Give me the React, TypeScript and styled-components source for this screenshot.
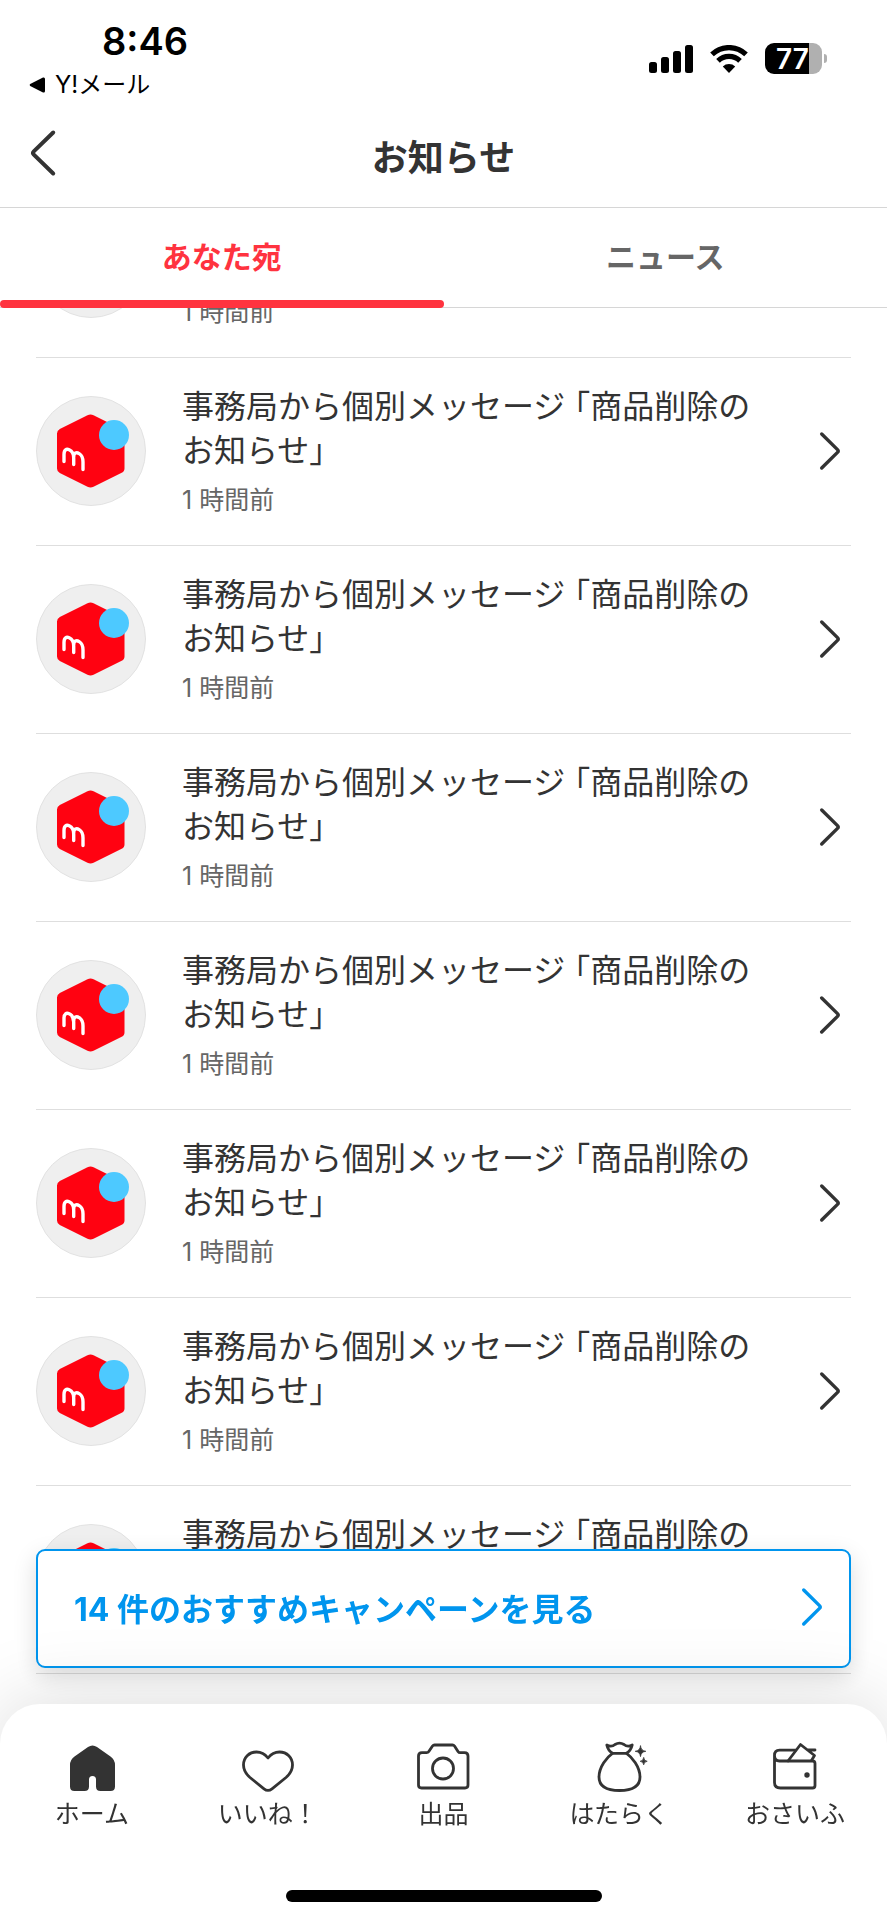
import React from "react";
import styled, { createGlobalStyle } from "styled-components";

const color = {
  text: "#333333",
  sub: "#666666",
  line: "#d6d6d6",
  red: "#ff333f",
  blue: "#0095ee",
  brand: "#ff0211",
  badge: "#4dc9ff",
};

const GlobalStyle = createGlobalStyle`
  *, *::before, *::after { box-sizing: border-box; }
  body {
    margin: 0;
    background: #fff;
    color: ${color.text};
    font-family: Inter, "Noto Sans CJK JP", sans-serif;
  }
  button { font: inherit; color: inherit; background: none; border: 0; padding: 0; cursor: pointer; }
  a { color: inherit; text-decoration: none; }
  p, h1, h2, ul { margin: 0; padding: 0; }
  ul { list-style: none; }
  svg { display: block; flex: none; }
`;

const Screen = styled.div`
  min-height: 100vh;
  background: #fff;
`;

const Top = styled.header`
  position: sticky;
  top: 0;
  z-index: 1;
  background: #fff;
`;

const StatusBar = styled.div`
  display: flex;
  justify-content: space-between;
  align-items: flex-start;
  height: 104px;
  padding: 17px 60px 0 29px;
  color: #000;
`;

const Clock = styled.p`
  padding-left: 73px;
  font-size: 38px;
  font-weight: 600;
  line-height: 48px;
`;

const ReturnLink = styled.a`
  display: flex;
  align-items: center;
  gap: 9px;
  font-size: 24px;
  line-height: 40px;
`;

const StatusIcons = styled.div`
  display: flex;
  align-items: center;
  gap: 17px;
  padding-top: 26px;
`;

const Battery = styled.div`
  display: flex;
  align-items: center;
  gap: 2px;
`;

const BatteryBody = styled.div`
  width: 57px;
  height: 31px;
  border-radius: 9px;
  background: linear-gradient(to right, #000 77%, #b0b0b0 77%);
  color: #fff;
  font-size: 28px;
  font-weight: 600;
  line-height: 32px;
  padding-left: 11px;
`;

const BatteryTip = styled.div`
  width: 3px;
  height: 9px;
  border-radius: 0 4px 4px 0;
  background: #b0b0b0;
`;

const TitleBar = styled.div`
  display: grid;
  grid-template-columns: 1fr auto 1fr;
  align-items: center;
  height: 104px;
  padding: 0 29px;
  border-bottom: 1px solid ${color.line};
`;

const BackButton = styled.button`
  justify-self: start;
  padding-bottom: 6px;
`;

const Title = styled.h1`
  padding-top: 4px;
  font-size: 36px;
  font-weight: 700;
  line-height: 48px;
`;

const Tabs = styled.div`
  display: grid;
  grid-template-columns: 1fr 1fr;
  height: 100px;
  border-bottom: 1px solid ${color.line};
`;

const Tab = styled.button<{ $active?: boolean }>`
  display: grid;
  grid-template-rows: 1fr 8px;
  align-items: center;
  height: 100px;
  color: ${(p) => (p.$active ? color.red : color.sub)};
  font-size: 30px;
  font-weight: 700;

  &::after {
    content: "";
    height: 8px;
    border-radius: 4px;
    background: ${(p) => (p.$active ? color.red : "transparent")};
  }
`;

const TabLabel = styled.span`
  padding-top: 2px;
`;

const ListArea = styled.main`
  overflow: hidden;
`;

/* The list is scrolled part-way through its first entry. */
const List = styled.ul`
  margin-top: -138px;
  padding: 0 36px;
`;

const Item = styled.li`
  border-bottom: 1px solid #dedede;
`;

const ItemLink = styled.a`
  display: flex;
  align-items: center;
  padding: 26px 9px 27px 0;
`;

const Avatar = styled.div`
  flex: none;
  width: 110px;
  height: 110px;
  border: 1px solid #e2e2e2;
  border-radius: 50%;
  background: #efefef;
`;

const ItemBody = styled.div`
  flex: 1;
  min-width: 0;
  padding: 1px 54px 0 36px;
`;

const ItemTitle = styled.h2`
  font-size: 32px;
  font-weight: 400;
  line-height: 44px;
  font-feature-settings: "halt";
`;

const ItemTime = styled.p`
  margin-top: 9px;
  color: ${color.sub};
  font-size: 25px;
  line-height: 36px;
`;

const Dock = styled.div`
  position: fixed;
  left: 0;
  right: 0;
  bottom: 0;
  z-index: 2;
`;

const Campaign = styled.button`
  display: flex;
  justify-content: space-between;
  align-items: center;
  width: calc(100% - 72px);
  height: 119px;
  margin: 0 36px 36px;
  padding: 0 25px 4px 36px;
  border: 2px solid ${color.blue};
  border-radius: 9px;
  background: #fff;
  box-shadow: 0 8px 24px rgba(0, 0, 0, 0.14);
  color: ${color.blue};
  font-size: 32px;
  font-weight: 700;
`;

const BottomNav = styled.nav`
  position: relative;
  padding: 32px 4px 18px;
  border-radius: 40px 40px 0 0;
  background: #fff;
  box-shadow: 0 0 80px rgba(0, 0, 0, 0.15);
`;

const NavItems = styled.ul`
  display: grid;
  grid-template-columns: repeat(5, 1fr);
`;

const NavLink = styled.a`
  display: flex;
  flex-direction: column;
  align-items: center;
  font-size: 25px;
  line-height: 36px;
`;

const HomeIndicator = styled.div`
  width: 316px;
  height: 12px;
  margin: 58px auto 0;
  border-radius: 6px;
  background: #000;
`;

const Chevron = () => (
  <svg width="24" height="42" viewBox="0 0 24 42" fill="none" stroke="currentColor" strokeWidth="3.4" strokeLinecap="round" strokeLinejoin="round" aria-hidden="true">
    <path d="M3.7 4 L19.5 19.6 Q20.9 21 19.5 22.4 L3.7 38" />
  </svg>
);

const BackIcon = () => (
  <svg width="28" height="48" viewBox="0 0 28 48" fill="none" stroke="currentColor" strokeWidth="4" strokeLinecap="round" strokeLinejoin="round" aria-hidden="true">
    <path d="M24.2 3.5 L4.8 22.4 Q3.2 24 4.8 25.6 L24.2 44.5" />
  </svg>
);

const SignalIcon = () => (
  <svg width="44" height="28" viewBox="0 0 44 28" aria-hidden="true">
    <rect x="0" y="17" width="8" height="11" rx="2.5" />
    <rect x="12" y="12" width="8" height="16" rx="2.5" />
    <rect x="24" y="6" width="8" height="22" rx="2.5" />
    <rect x="36" y="0" width="8" height="28" rx="2.5" />
  </svg>
);

const WifiIcon = () => (
  <svg width="38" height="28" viewBox="0 0 38 28" aria-hidden="true">
    <g fill="none" stroke="#000" strokeWidth="5.2">
      <path d="M2 9.4 A24.5 24.5 0 0 1 36 9.4" />
      <path d="M8 15.8 A15.8 15.8 0 0 1 30 15.8" />
    </g>
    <path d="M12.8 21.5 A9 9 0 0 1 25.2 21.5 L19 28 Z" />
  </svg>
);

const BrandMark = () => (
  <svg width="108" height="108" viewBox="1 0 108 108" aria-hidden="true">
    <path
      fill={color.brand}
      d="M51.5 18.2 Q54.5 16.7 57.5 18.2 L85.2 32 Q88.5 33.5 88.5 36.5 V71.5 Q88.5 74.5 85.2 76 L57.5 89.8 Q54.5 91.3 51.5 89.8 L23.8 76 Q21 74.5 21 71.5 V36.5 Q21 33.5 23.8 32 Z"
    />
    <path
      fill="none"
      stroke="#fff"
      strokeWidth="3.4"
      strokeLinecap="round"
      d="M28 64.5 V57.5 C28 52.5 30.5 51.6 33.2 52.8 C36.5 54.3 37.7 57 37.7 61 V67.5 M37.7 60 C37.7 55.6 40.5 55 43.2 56.6 C46.2 58.4 47 61.5 47 65 V72.5"
    />
    <circle cx="78" cy="38" r="15" fill={color.badge} />
  </svg>
);

const NavIcon = ({ children }: { children: React.ReactNode }) => (
  <svg width="60" height="60" viewBox="0 0 60 60" fill="none" stroke={color.text} strokeWidth="2.8" strokeLinecap="round" strokeLinejoin="round" aria-hidden="true">
    {children}
  </svg>
);

const navItems = [
  {
    label: "ホーム",
    icon: (
      <path
        fill={color.text}
        stroke="none"
        d="M26 11 Q30.5 8 35 11 L48.5 20.5 Q53 23.8 53 29 V50.5 Q53 55 48.5 55 H38.5 Q34 55 34 50.5 V43.5 Q34 40 30.5 40 Q27 40 27 43.5 V50.5 Q27 55 22.5 55 H12.5 Q8 55 8 50.5 V29 Q8 23.8 12.5 20.5 Z"
      />
    ),
  },
  {
    label: "いいね！",
    icon: (
      <path d="M30 22 C26.5 17.5 22.5 16 18.5 16 C11 16 5.5 21.8 5.5 29 C5.5 34 8 38 12 41.5 L26 52.8 Q30 56 34 52.8 L48 41.5 C52 38 54.5 34 54.5 29 C54.5 21.8 49 16 41.5 16 C37.5 16 33.5 17.5 30 22 Z" />
    ),
  },
  {
    label: "出品",
    icon: (
      <>
        <path d="M9 16.7 H13.5 Q15 16.7 15.8 15.5 L19.5 10 Q20.3 9 21.5 9 H39.5 Q40.7 9 41.5 10 L45 15.5 Q45.8 16.7 47.2 16.7 H51.5 Q55 16.7 55 20 V49 Q55 52 52 52 H8.5 Q5.5 52 5.5 49 V20 Q5.5 16.7 9 16.7 Z" />
        <circle cx="30" cy="32.5" r="10.5" />
      </>
    ),
  },
  {
    label: "はたらく",
    icon: (
      <>
        <path d="M23.5 17.3 H37.5 C43 21 51 31 51 41 C51 50.5 44 54.5 30.5 54.5 C17 54.5 10 50.5 10 41 C10 31 18 21 23.5 17.3 Z" />
        <path d="M23.5 17.3 Q19 14.5 17.8 9 Q22.5 11.5 26 8.5 Q30.5 5.8 35 8.5 Q38.5 11.5 43.2 9 Q42 14.5 37.5 17.3" />
        <path
          fill={color.text}
          strokeWidth="0.8"
          d="M51.5 10 Q52 14.8 56.8 15.3 Q52 15.8 51.5 20.6 Q51 15.8 46.2 15.3 Q51 14.8 51.5 10 Z M54.7 21.8 Q55 25 58.2 25.3 Q55 25.6 54.7 28.8 Q54.4 25.6 51.2 25.3 Q54.4 25 54.7 21.8 Z"
        />
      </>
    ),
  },
  {
    label: "おさいふ",
    icon: (
      <>
        <path d="M30.5 14.2 H14.5 Q9.5 14.2 9.5 19.5 Q9.5 25 14.5 25 H47.5 Q50 25 50 27.5 V49.5 Q50 52 47.5 52 H15.5 Q9.5 52 9.5 46.5 V19.5" />
        <path d="M23 25 L35.5 8.5 L49.5 19.5 L46.5 24.5 M42.5 14 H50" />
        <circle cx="42" cy="39" r="2.7" fill={color.text} stroke="none" />
      </>
    ),
  },
];

const notices = Array.from({ length: 8 }, (_, id) => ({
  id,
  title: "事務局から個別メッセージ 「商品削除のお知らせ」",
  time: "1 時間前",
}));

const Notice = ({ title, time }: { title: string; time: string }) => (
  <Item>
    <ItemLink href="#notice">
      <Avatar>
        <BrandMark />
      </Avatar>
      <ItemBody>
        <ItemTitle>{title}</ItemTitle>
        <ItemTime>{time}</ItemTime>
      </ItemBody>
      <Chevron />
    </ItemLink>
  </Item>
);

export default function App() {
  return (
    <Screen>
      <GlobalStyle />
      <Top>
        <StatusBar>
          <div>
            <Clock>8:46</Clock>
            <ReturnLink href="#mail">
              <svg width="17" height="16" viewBox="0 0 17 16" aria-hidden="true">
                <path d="M1.2 7 L14 0.6 Q16 0 16 2 V14 Q16 16 14 15.4 L1.2 9 Q0 8 1.2 7 Z" />
              </svg>
              Y!メール
            </ReturnLink>
          </div>
          <StatusIcons>
            <SignalIcon />
            <WifiIcon />
            <Battery>
              <BatteryBody>77</BatteryBody>
              <BatteryTip />
            </Battery>
          </StatusIcons>
        </StatusBar>
        <TitleBar>
          <BackButton type="button" aria-label="戻る">
            <BackIcon />
          </BackButton>
          <Title>お知らせ</Title>
        </TitleBar>
        <Tabs role="tablist">
          <Tab type="button" role="tab" aria-selected="true" $active>
            <TabLabel>あなた宛</TabLabel>
          </Tab>
          <Tab type="button" role="tab" aria-selected="false">
            <TabLabel>ニュース</TabLabel>
          </Tab>
        </Tabs>
      </Top>
      <ListArea>
        <List>
          {notices.map((n) => (
            <Notice key={n.id} title={n.title} time={n.time} />
          ))}
        </List>
      </ListArea>
      <Dock>
        <Campaign type="button">
          14 件のおすすめキャンペーンを見る
          <Chevron />
        </Campaign>
        <BottomNav>
          <NavItems>
            {navItems.map((item) => (
              <li key={item.label}>
                <NavLink href="#nav">
                  <NavIcon>{item.icon}</NavIcon>
                  {item.label}
                </NavLink>
              </li>
            ))}
          </NavItems>
          <HomeIndicator />
        </BottomNav>
      </Dock>
    </Screen>
  );
}
